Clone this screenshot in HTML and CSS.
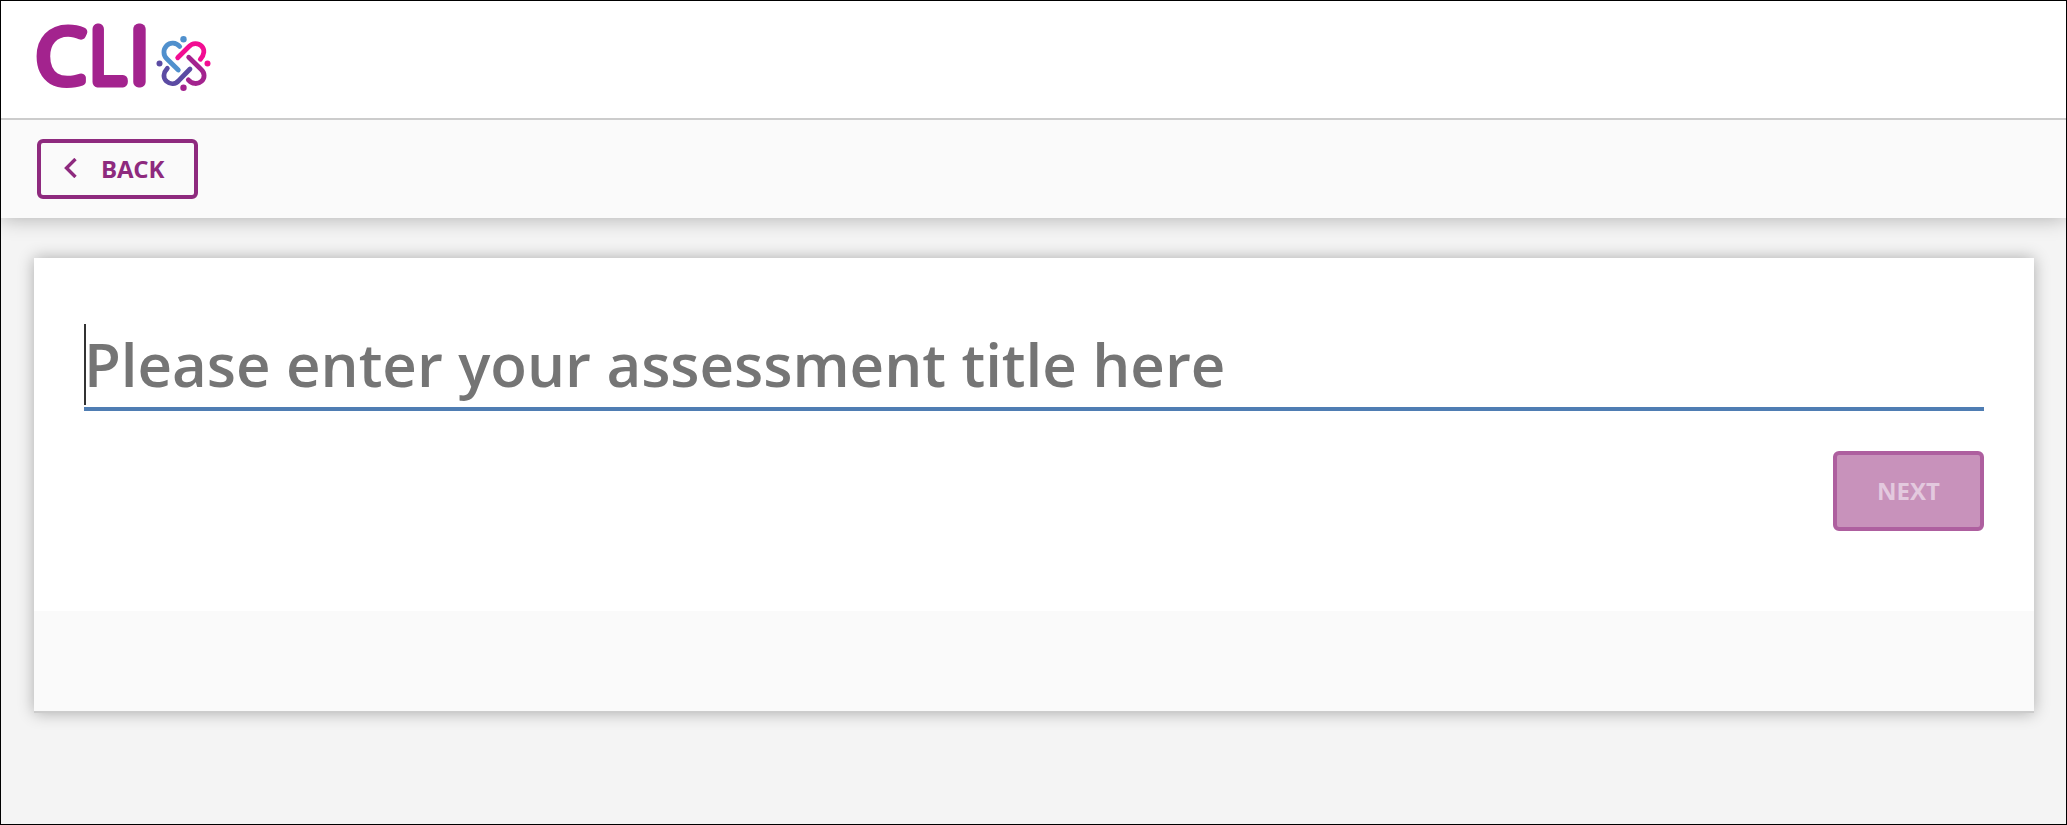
FILE: index.html
```html
<!DOCTYPE html>
<html lang="en">
<head>
<meta charset="utf-8">
<title>Clio</title>
<link rel="stylesheet" href="styles.css">
</head>
<body>
<div class="app">
  <header class="header">
    <svg class="logo" width="176" height="68" viewBox="0 0 176 68" role="img" aria-label="Clio">
      <g class="logo-word">
        <text class="logo-c" x="-0.500" y="59.300" textLength="48.500" lengthAdjust="spacingAndGlyphs">C</text>
        <text x="53" y="58" textLength="37" lengthAdjust="spacingAndGlyphs">L</text>
        <text x="102.500" y="58" text-anchor="middle">I</text>
      </g>
      <g class="logo-knot">
        <path class="knot-blue" d="M142.700 22.500 C139 18.200 133 18.200 129.800 21.500 C126 25.500 126 31 129.800 34.700 L141.300 46"/>
        <path class="knot-pink" d="M140.700 33.800 L152 22.500 C155.500 18.800 161 18.500 164.500 22 C168 25.500 167.500 30.500 163.300 35.300"/>
        <path class="knot-purple" d="M151.700 33.300 L164.200 45.500 C168 49 168 54 164.500 57.200 C160.500 60.800 155 60 151.300 55.800"/>
        <path class="knot-indigo" d="M130.300 44.300 C126 49 126 54 129.500 57.300 C133.500 60.800 138.500 60.300 142 56.300 L153 45"/>
      </g>
      <circle class="dot-blue" cx="146.500" cy="15.200" r="3.200"/>
      <circle class="dot-pink" cx="170.500" cy="39.500" r="3"/>
      <circle class="dot-purple" cx="146.500" cy="63.700" r="3.200"/>
      <circle class="dot-indigo" cx="122.500" cy="39.500" r="3"/>
    </svg>
  </header>
  <nav class="toolbar">
    <button class="button back" type="button">
      <svg class="chevron" width="14" height="20" viewBox="0 0 14 20"><path d="M12.500 1 L3.500 10 L12.500 19"/></svg>
      <span>BACK</span>
    </button>
  </nav>
  <main class="content">
    <section class="card">
      <div class="card-body">
        <div class="title-field"><span class="caret"></span><span class="placeholder">Please enter your assessment title here</span></div>
        <button class="button next" type="button">NEXT</button>
      </div>
      <div class="card-footer"></div>
    </section>
  </main>
</div>
</body>
</html>
```
FILE: styles.css
```css
* { box-sizing: border-box; }
body { margin: 0; font-family: "Open Sans", "Noto Sans", sans-serif; }
.app {
  height: 825px;
  display: flex;
  flex-direction: column;
  border: 1px solid #000;
  background: #f4f4f4;
  overflow: hidden;
}
.header {
  position: relative;
  z-index: 1;
  flex: none;
  height: 119px;
  padding: 23px 36px 0;
  background: #fff;
  border-bottom: 2px solid #ccc;
}
.logo { display: block; overflow: visible; }
.logo-word {
  font-family: Inter, sans-serif;
  font-size: 72px;
  font-weight: 100;
  fill: #a3238e;
  stroke: #a3238e;
  stroke-width: 10.8px;
  stroke-linejoin: round;
}
.logo-c {
  font-family: "Open Sans", sans-serif;
  font-size: 74px;
  font-weight: 300;
  stroke-width: 9px;
}
.logo-knot { fill: none; stroke-width: 4.8px; stroke-linecap: round; }
.knot-blue { stroke: #5090cd; }
.knot-pink { stroke: #f20d92; }
.knot-purple { stroke: #a3238e; }
.knot-indigo { stroke: #5b4ba3; }
.dot-blue { fill: #5090cd; }
.dot-pink { fill: #f20d92; }
.dot-purple { fill: #a3238e; }
.dot-indigo { fill: #5b4ba3; }
.toolbar {
  flex: none;
  height: 98px;
  padding: 19px 36px;
  background: #fafafa;
  box-shadow: 0 0 20px rgba(0, 0, 0, .3);
}
.button {
  font: 700 24px/1 "Open Sans", "Noto Sans", sans-serif;
  border: 4px solid #8e2a7e;
  border-radius: 6px;
  padding: 0;
}
.back {
  display: flex;
  align-items: center;
  gap: 24px;
  width: 161px;
  height: 60px;
  padding-left: 22px;
  color: #8e2a7e;
  background: transparent;
}
.back span { letter-spacing: -0.2px; }
.chevron { margin-top: -2px; fill: none; stroke: #8e2a7e; stroke-width: 3.4px; }
.content { padding: 40px 32px 0 33px; }
.card {
  background: #fff;
  border-bottom: 2px solid #ccc;
  box-shadow: 0 0 15px rgba(0, 0, 0, .3);
}
.card-body {
  height: 353px;
  padding: 66px 50px 0;
  display: flex;
  flex-direction: column;
}
.title-field {
  display: flex;
  height: 87px;
  border-bottom: 4px solid #4f7db3;
}
.caret { width: 2px; height: 81px; margin-right: -2px; background: #333; }
.placeholder {
  font-size: 60px;
  font-weight: 600;
  line-height: 81px;
  letter-spacing: -0.04px;
  color: #757575;
  white-space: nowrap;
}
.next {
  align-self: flex-end;
  width: 151px;
  height: 80px;
  margin-top: 40px;
  color: #e3c9de;
  background: #c892bb;
  border-color: #ae5f9f;
}
.card-footer { height: 100px; background: #fafafa; }
```
